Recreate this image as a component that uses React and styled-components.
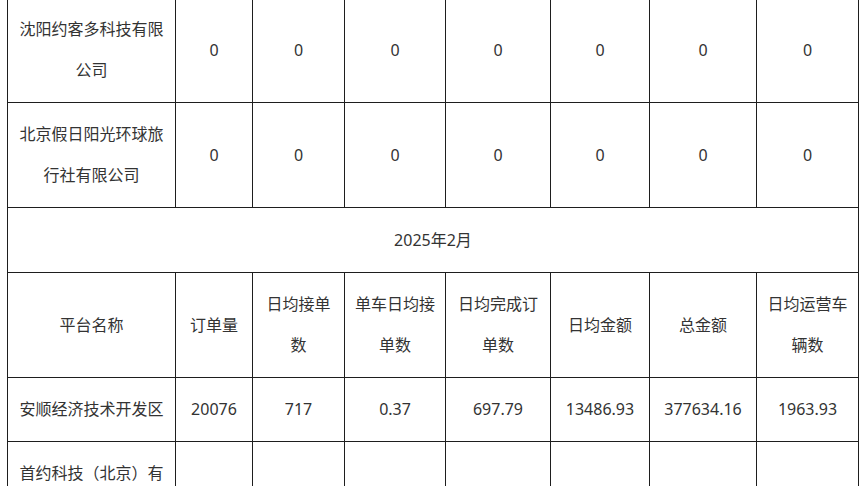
import React from "react";
import styled, { createGlobalStyle } from "styled-components";

const Global = createGlobalStyle`
  html, body { margin: 0; padding: 0; background: #fff; overflow: hidden; }
  body { font-family: "Noto Sans", "Noto Sans CJK SC", sans-serif; }
`;

const Page = styled.div`
  padding-left: 7px;
  width: 865px;
  height: 486px;
  overflow: hidden;
  box-sizing: border-box;
`;

const Table = styled.table`
  margin-top: -3px;
  width: 852px;
  table-layout: fixed;
  border-collapse: collapse;
  color: #333;
  font-size: 16px;
`;

const Cell = styled.td`
  border: 1px solid #1e1e1e;
  padding: 11px 8px;
  line-height: 41px;
  text-align: center;
  vertical-align: middle;
  word-break: break-all;
  ${(p) => (p.$tall ? "padding-top: 11.5px; padding-bottom: 11.5px;" : "")}
`;

const widths = [168, 77, 92, 101, 105, 99, 107, 102];

const rows = [
  { name: "沈阳约客多科技有限公司", vals: ["0", "0", "0", "0", "0", "0", "0"] },
  { name: "北京假日阳光环球旅行社有限公司", vals: ["0", "0", "0", "0", "0", "0", "0"] },
];

const headers = ["平台名称", "订单量", "日均接单数", "单车日均接单数", "日均完成订单数", "日均金额", "总金额", "日均运营车辆数"];

const data = [
  { name: "安顺经济技术开发区", vals: ["20076", "717", "0.37", "697.79", "13486.93", "377634.16", "1963.93"] },
  { name: "首约科技（北京）有限公司", vals: ["", "", "", "", "", "", ""] },
];

export default function App() {
  return (
    <>
      <Global />
      <Page>
        <Table>
          <colgroup>
            {widths.map((w, i) => (
              <col key={i} style={{ width: w }} />
            ))}
          </colgroup>
          <tbody>
            {rows.map((r) => (
              <tr key={r.name}>
                <Cell>{r.name}</Cell>
                {r.vals.map((v, i) => (
                  <Cell key={i}>{v}</Cell>
                ))}
              </tr>
            ))}
            <tr>
              <Cell colSpan={8} $tall>2025年2月</Cell>
            </tr>
            <tr>
              {headers.map((h) => (
                <Cell key={h}>{h}</Cell>
              ))}
            </tr>
            {data.map((r) => (
              <tr key={r.name}>
                <Cell>{r.name}</Cell>
                {r.vals.map((v, i) => (
                  <Cell key={i}>{v}</Cell>
                ))}
              </tr>
            ))}
          </tbody>
        </Table>
      </Page>
    </>
  );
}
